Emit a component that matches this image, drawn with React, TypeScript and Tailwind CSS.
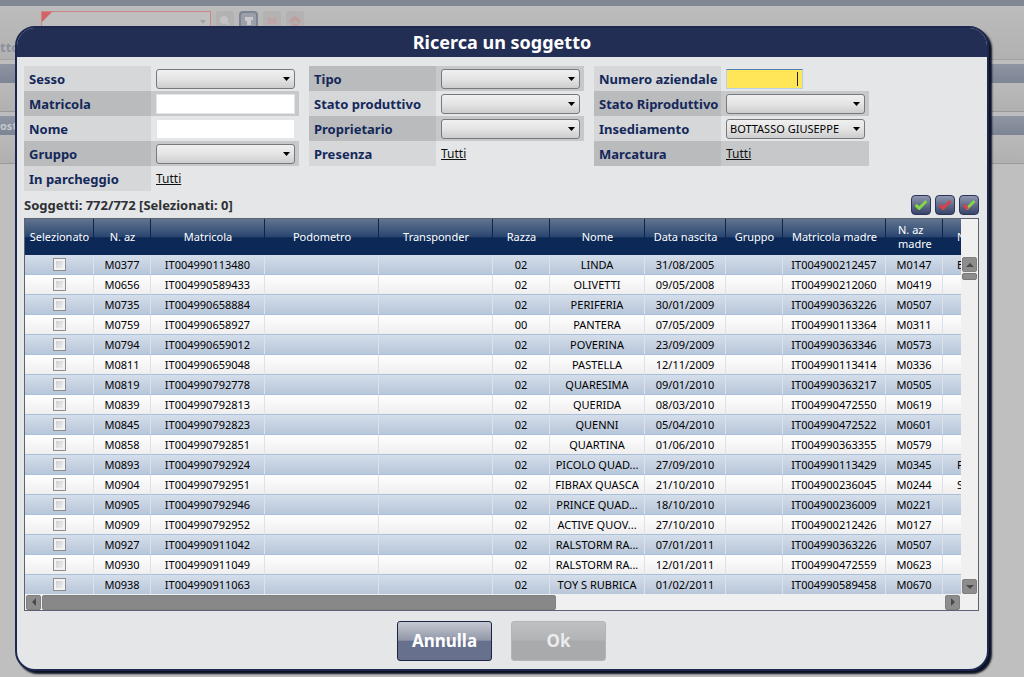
import React from "react";

type Field = {
  id: string;
  label: string;
  kind: "select" | "text" | "link" | "number";
  value?: string;
  dark: boolean;
};

const fieldColumns: Field[][] = [
  [
    { id: "sesso", label: "Sesso", kind: "select", dark: false },
    { id: "matricola", label: "Matricola", kind: "text", dark: true },
    { id: "nome", label: "Nome", kind: "text", dark: false },
    { id: "gruppo", label: "Gruppo", kind: "select", dark: true },
    { id: "parcheggio", label: "In parcheggio", kind: "link", value: "Tutti", dark: false },
  ],
  [
    { id: "tipo", label: "Tipo", kind: "select", dark: true },
    { id: "stato-produttivo", label: "Stato produttivo", kind: "select", dark: false },
    { id: "proprietario", label: "Proprietario", kind: "select", dark: true },
    { id: "presenza", label: "Presenza", kind: "link", value: "Tutti", dark: false },
  ],
  [
    { id: "numero", label: "Numero aziendale", kind: "number", dark: false },
    { id: "stato-riproduttivo", label: "Stato Riproduttivo", kind: "select", dark: true },
    { id: "insediamento", label: "Insediamento", kind: "select", value: "BOTTASSO GIUSEPPE", dark: false },
    { id: "marcatura", label: "Marcatura", kind: "link", value: "Tutti", dark: true },
  ],
];

const headers = [
  "Selezionato",
  "N. az",
  "Matricola",
  "Podometro",
  "Transponder",
  "Razza",
  "Nome",
  "Data nascita",
  "Gruppo",
  "Matricola madre",
];

const rows: string[][] = [
  ["M0377", "IT004990113480", "02", "LINDA", "31/08/2005", "IT004900212457", "M0147", "E"],
  ["M0656", "IT004990589433", "02", "OLIVETTI", "09/05/2008", "IT004990212060", "M0419", ""],
  ["M0735", "IT004990658884", "02", "PERIFERIA", "30/01/2009", "IT004990363226", "M0507", ""],
  ["M0759", "IT004990658927", "00", "PANTERA", "07/05/2009", "IT004990113364", "M0311", ""],
  ["M0794", "IT004990659012", "02", "POVERINA", "23/09/2009", "IT004990363346", "M0573", ""],
  ["M0811", "IT004990659048", "02", "PASTELLA", "12/11/2009", "IT004990113414", "M0336", ""],
  ["M0819", "IT004990792778", "02", "QUARESIMA", "09/01/2010", "IT004990363217", "M0505", ""],
  ["M0839", "IT004990792813", "02", "QUERIDA", "08/03/2010", "IT004990472550", "M0619", ""],
  ["M0845", "IT004990792823", "02", "QUENNI", "05/04/2010", "IT004990472522", "M0601", ""],
  ["M0858", "IT004990792851", "02", "QUARTINA", "01/06/2010", "IT004990363355", "M0579", ""],
  ["M0893", "IT004990792924", "02", "PICOLO QUAD...", "27/09/2010", "IT004990113429", "M0345", "F"],
  ["M0904", "IT004990792951", "02", "FIBRAX QUASCA", "21/10/2010", "IT004900236045", "M0244", "S"],
  ["M0905", "IT004990792946", "02", "PRINCE QUAD...", "18/10/2010", "IT004900236009", "M0221", ""],
  ["M0909", "IT004990792952", "02", "ACTIVE QUOV...", "27/10/2010", "IT004900212426", "M0127", ""],
  ["M0927", "IT004990911042", "02", "RALSTORM RA...", "07/01/2011", "IT004990363226", "M0507", ""],
  ["M0930", "IT004990911049", "02", "RALSTORM RA...", "12/01/2011", "IT004990472559", "M0623", ""],
  ["M0938", "IT004990911063", "02", "TOY S RUBRICA", "01/02/2011", "IT004990589458", "M0670", ""],
];

function SelectBox({ id, value }: { id: string; value?: string }) {
  return (
    <div className="relative w-[139px]">
      <select
        id={id}
        defaultValue={value ?? ""}
        className="block h-5 w-full appearance-none rounded-[3px] border border-[#77797c] bg-linear-to-b from-[#f0f0f0] via-[#e4e4e4] to-[#cdcdcd] pl-[3px] text-[11px] leading-4 text-black"
      >
        <option value={value ?? ""}>{value ?? ""}</option>
      </select>
      <svg viewBox="0 0 7 4" className="pointer-events-none absolute top-2 right-[5px] h-1 w-[7px]" aria-hidden="true">
        <path d="M0 0h7L3.5 4z" fill="#000" />
      </svg>
    </div>
  );
}

function FieldControl({ field }: { field: Field }) {
  if (field.kind === "select") return <SelectBox id={field.id} value={field.value} />;
  if (field.kind === "text")
    return <input id={field.id} type="text" className="block h-5 w-[139px] border border-[#e3e5e8] bg-white px-1 text-[11px]" />;
  if (field.kind === "number")
    return (
      <div className="relative w-[77px]">
        <input
          id={field.id}
          type="text"
          className="block h-5 w-full border border-[#b4cfe6] border-t-[#4f7fae] bg-[#ffe658] px-1 text-right text-[11px]"
        />
        <span className="pointer-events-none absolute top-[3px] right-[5px] h-[14px] w-px bg-[#222]" />
      </div>
    );
  return (
    <a id={field.id} href="#" className="text-[12px] leading-4 text-[#111] underline">
      {field.value}
    </a>
  );
}

function FieldRow({ field }: { field: Field }) {
  return (
    <div className="flex h-[25px]">
      <label
        htmlFor={field.id}
        className={`flex w-[127px] items-center pl-[5px] text-[13px] leading-4 font-bold whitespace-nowrap text-[#14285a] ${
          field.dark ? "bg-[#babbbc]" : "bg-[#d5d7d9]"
        }`}
      >
        {field.label}
      </label>
      <div className={`flex w-[148px] items-center pl-[5px] ${field.dark ? "bg-[#c7c8c9]" : ""}`}>
        <FieldControl field={field} />
      </div>
    </div>
  );
}

function CheckButton({ label, left, right }: { label: string; left: string; right: string }) {
  return (
    <button
      type="button"
      aria-label={label}
      className="flex h-5 w-5 items-center justify-center rounded-[4px] border border-[#2c3459] bg-linear-to-b from-[#8f98ae] to-[#3a4469]"
    >
      <svg viewBox="0 0 14 14" className="h-[14px] w-[14px]" fill="none" strokeWidth="3" aria-hidden="true">
        <path d="M1.6 6.8 6 11" stroke={left} />
        <path d="M4.6 11 12.4 3" stroke={right} />
        <path d="M3 8.2 6 11" stroke={left} />
      </svg>
    </button>
  );
}

const arrowPaths = {
  up: "M0 6 4 2 8 6z",
  down: "M0 2h8L4 6z",
  left: "M6 0v8L2 4z",
  right: "M2 0v8l4-4z",
};

function ScrollArrow({ dir, label }: { dir: keyof typeof arrowPaths; label: string }) {
  return (
    <button
      type="button"
      aria-label={label}
      className="flex h-[15px] w-[15px] shrink-0 items-center justify-center rounded-[2px] border border-[#808080] bg-[#8d8d8d]"
    >
      <svg viewBox="0 0 8 8" className="h-2 w-2" aria-hidden="true">
        <path d={arrowPaths[dir]} fill="#4a4a4a" />
      </svg>
    </button>
  );
}

function Backdrop() {
  return (
    <div aria-hidden="true" className="absolute inset-0 flex flex-col overflow-hidden bg-[#bfbfbf]">
      <div className="h-[6px] bg-[#808894]" />
      <div className="flex h-[53px] flex-col bg-linear-to-b from-[#bcbcbc] to-[#b1b1b1]">
        <div className="flex gap-[5px] pt-[5px] pl-[41px]">
          <div className="relative h-[22px] w-[170px] border border-[#cf8588] bg-[#bfbfbf]">
            <svg viewBox="0 0 10 10" className="h-[10px] w-[10px]">
              <path d="M0 0h10L0 10z" fill="#d06468" />
            </svg>
            <svg viewBox="0 0 6 4" className="absolute top-2 right-1 h-1 w-[6px]">
              <path d="M0 0h6L3 4z" fill="#a2a2a2" />
            </svg>
          </div>
          <div className="flex h-5 w-[18px] items-center justify-center rounded-[3px] bg-[#b2b2b3]">
            <svg viewBox="0 0 12 12" className="h-3 w-3" fill="#c3c3c3" stroke="#c3c3c3" strokeWidth="2">
              <circle cx="5" cy="5" r="3" />
              <path d="m7 7 3 3" />
            </svg>
          </div>
          <div className="flex h-5 w-[19px] items-center justify-center rounded-[4px] border-2 border-[#7d8494] bg-[#9b9fa9]">
            <svg viewBox="0 0 10 10" className="h-[10px] w-[10px]" fill="#c9cacd">
              <path d="M1 1h8v3H7v5H3V5H1z" />
            </svg>
          </div>
          <div className="flex h-5 w-[18px] items-center justify-center rounded-[3px] bg-[#b3b1b1]">
            <svg viewBox="0 0 12 12" className="h-3 w-3" stroke="#bfa5a6" strokeWidth="3">
              <path d="m2 3 8 6M2 9l8-6" />
            </svg>
          </div>
          <div className="flex h-5 w-[18px] items-center justify-center rounded-[3px] bg-[#b3b1b1]">
            <svg viewBox="0 0 12 12" className="h-3 w-3" fill="none" stroke="#c19c9d" strokeWidth="3">
              <path d="m1 7 5-4 5 4M3 10h6" />
            </svg>
          </div>
        </div>
        <div className="pt-1 text-[13px] leading-5 font-bold text-[#8c909c]">tto</div>
      </div>
      <div className="h-[5px] border-t border-[#a3a3a3] bg-[#bdbdbd]" />
      <div className="h-[19px] bg-linear-to-b from-[#8f95a2] to-[#7d8494]" />
      <div className="h-[29px] border-b border-[#999] bg-linear-to-b from-[#bababa] to-[#b0b0b0]" />
      <div className="h-1 bg-[#bdbdbd]" />
      <div className="h-[19px] bg-linear-to-b from-[#8f95a2] to-[#7d8494] text-[11px] leading-5 font-bold text-[#c6c8cc]">ost</div>
      <div className="h-[29px] border-b border-[#999] bg-linear-to-b from-[#bababa] to-[#b0b0b0]" />
    </div>
  );
}

export default function App() {
  return (
    <div className="relative min-h-screen font-['Noto_Sans','Open_Sans',sans-serif]">
      <Backdrop />
      <div className="relative pt-[26px] pr-[35px] pb-[6px] pl-[15px]">
        <section
          role="dialog"
          aria-labelledby="dialog-title"
          className="overflow-hidden rounded-[20px] border-2 border-[#1c2850] bg-[#e4e6e8] shadow-[3px_3px_2px_0px_#0c1222]"
        >
          <h1
            id="dialog-title"
            className="h-[29px] bg-[#232e55] text-center text-[18px] leading-7 font-bold text-white"
          >
            Ricerca un soggetto
          </h1>

          <div className="pt-[9px] pr-2 pb-2 pl-[7px]">
            <div className="flex gap-[10px]">
              {fieldColumns.map((column) => (
                <div key={column[0].id}>
                  {column.map((field) => (
                    <FieldRow key={field.id} field={field} />
                  ))}
                </div>
              ))}
            </div>

            <div className="flex h-[27px] items-center justify-between">
              <p className="text-[13px] leading-5 font-bold text-[#2f3033]">Soggetti: 772/772 [Selezionati: 0]</p>
              <div className="flex gap-1">
                <CheckButton label="Seleziona tutti" left="#84d548" right="#84d548" />
                <CheckButton label="Deseleziona tutti" left="#d8404c" right="#d8404c" />
                <CheckButton label="Inverti selezione" left="#d8404c" right="#84d548" />
              </div>
            </div>

            <div className="border border-[#5d6372] bg-[#f0f0f0]">
              <div className="flex">
                <div className="h-[375px] min-w-0 flex-1 overflow-hidden">
                  <table className="w-full min-w-[1000px] table-fixed border-separate border-spacing-0 text-[11px] leading-4 text-black">
                    <colgroup>
                      <col className="w-[69px]" />
                      <col className="w-[57px]" />
                      <col className="w-[114px]" />
                      <col className="w-[114px]" />
                      <col className="w-[114px]" />
                      <col className="w-[57px]" />
                      <col className="w-[95px]" />
                      <col className="w-[81px]" />
                      <col className="w-[57px]" />
                      <col className="w-[103px]" />
                      <col className="w-[57px]" />
                      <col />
                    </colgroup>
                    <thead>
                      <tr className="h-9 bg-linear-to-b from-[#62758f] from-0% via-[#29456f] via-50% to-[#0b2857] to-52% text-white">
                        {headers.map((h) => (
                          <th
                            key={h}
                            className="overflow-hidden bg-[linear-gradient(#0b2550,#0b2550)] bg-[length:1px_19px] bg-[position:right_top] bg-no-repeat p-0 font-normal whitespace-nowrap"
                          >
                            {h}
                          </th>
                        ))}
                        <th className="bg-[linear-gradient(#0b2550,#0b2550)] bg-[length:1px_19px] bg-[position:right_top] bg-no-repeat p-0 pl-3 text-left leading-[14px] font-normal">
                          N. az
                          <br />
                          madre
                        </th>
                        <th className="p-0 pl-[14px] text-left font-normal whitespace-nowrap">Nome</th>
                      </tr>
                    </thead>
                    <tbody>
                      {rows.map((r) => (
                        <tr
                          key={r[0]}
                          className="h-5 odd:bg-linear-to-b odd:from-[#d5deea] odd:to-[#b7c5d9] even:bg-linear-to-b even:from-[#ffffff] even:to-[#efeded] [&>td]:border-r [&>td]:border-b [&>td]:border-r-[#dde1ea] [&>td]:border-b-[#a9c0da] [&>td]:p-0 [&>td]:text-center [&>td]:whitespace-nowrap"
                        >
                          <td>
                            <input
                              type="checkbox"
                              aria-label={`Seleziona ${r[0]}`}
                              className="mx-auto block h-[13px] w-[13px] appearance-none border border-[#8b8f94] bg-linear-to-br from-[#c6c9cc] to-[#f6f6f6] shadow-[inset_0_0_0_2px_#f2f2f2]"
                            />
                          </td>
                          <td>{r[0]}</td>
                          <td>{r[1]}</td>
                          <td />
                          <td />
                          <td>{r[2]}</td>
                          <td>{r[3]}</td>
                          <td>{r[4]}</td>
                          <td />
                          <td>{r[5]}</td>
                          <td>{r[6]}</td>
                          <td>
                            <span className="block pl-[14px] text-left">{r[7]}</span>
                          </td>
                        </tr>
                      ))}
                    </tbody>
                  </table>
                </div>
                <div className="flex w-[17px] flex-col items-center pt-[38px]">
                  <ScrollArrow dir="up" label="Scorri su" />
                  <div className="mt-px h-[7px] w-[15px] rounded-[2px] border border-[#777] bg-[#8d8d8d]" />
                  <div className="flex-1" />
                  <ScrollArrow dir="down" label="Scorri giù" />
                </div>
              </div>
              <div className="flex h-4 items-center gap-px pr-[18px] pl-px">
                <ScrollArrow dir="left" label="Scorri a sinistra" />
                <div className="flex flex-1">
                  <div className="h-[15px] w-[57%] rounded-[2px] border border-[#808080] bg-[#888]" />
                </div>
                <ScrollArrow dir="right" label="Scorri a destra" />
              </div>
            </div>

            <div className="flex justify-center gap-[19px] pt-[10px]">
              <button
                type="button"
                className="h-10 w-[95px] rounded-[3px] border border-[#1e2544] bg-linear-to-b from-[#c6c9d2] from-0% via-[#9197a8] via-48% to-[#67708c] to-50% text-[17px] leading-6 font-bold text-white"
              >
                Annulla
              </button>
              <button
                type="button"
                disabled
                className="h-10 w-[95px] rounded-[3px] border border-[#b4b5b7] bg-linear-to-b from-[#bfc0c2] from-0% via-[#b2b3b5] via-48% to-[#a9aaac] to-50% text-[17px] leading-6 font-bold text-[#ebebec]"
              >
                Ok
              </button>
            </div>
          </div>
        </section>
      </div>
    </div>
  );
}
